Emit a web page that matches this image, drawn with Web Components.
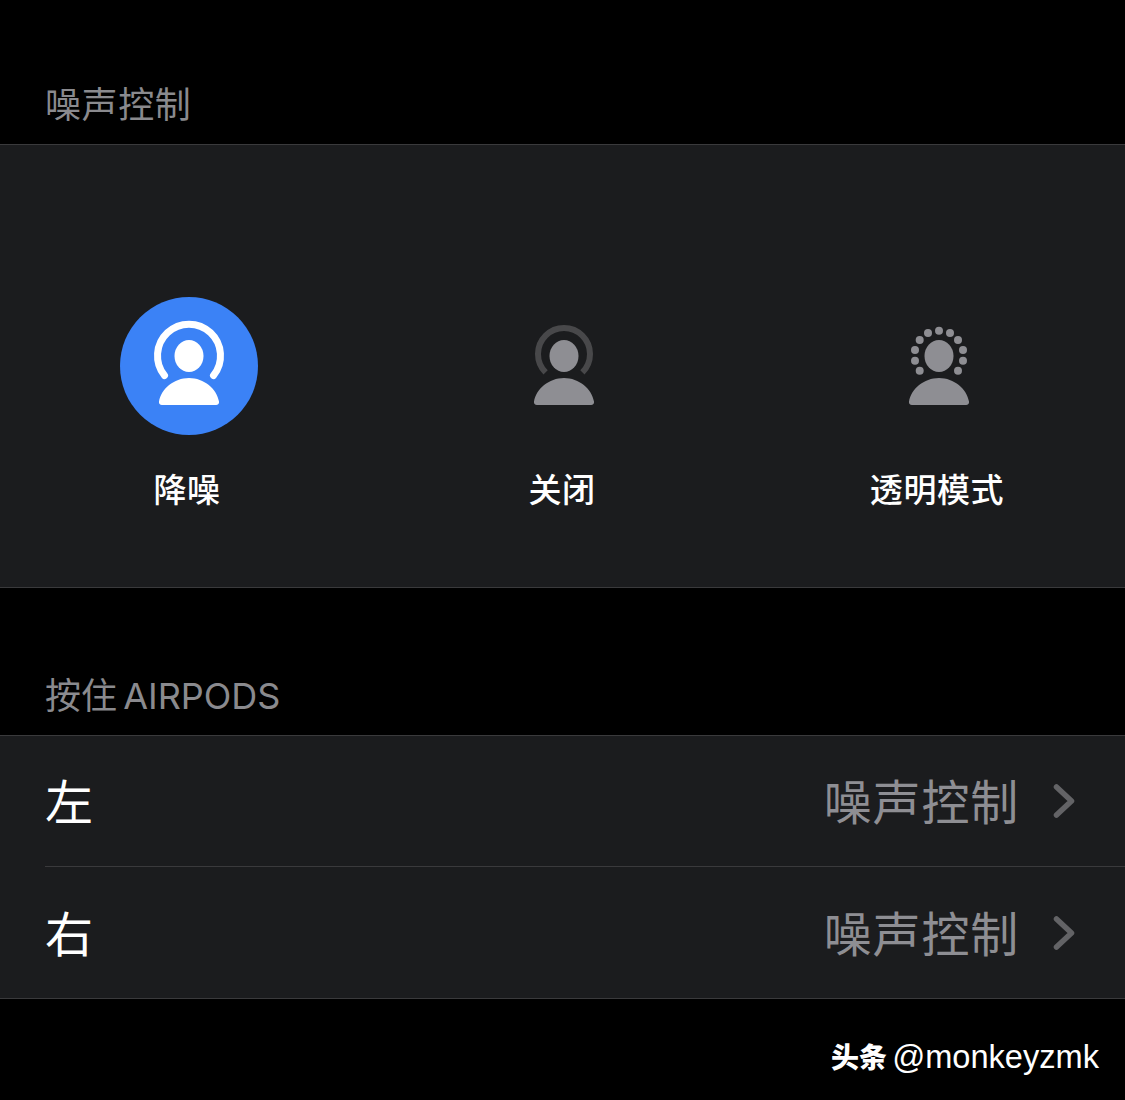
<!DOCTYPE html>
<html lang="zh">
<head>
<meta charset="utf-8">
<title>AirPods</title>
<style>
html, body { margin: 0; background: #000; }
body { width: 1125px; height: 1100px; overflow: hidden; font-family: Inter, "Noto Sans CJK SC", sans-serif; }
</style>
</head>
<body>
<section-title style="--h:144px;--ls:.6px">噪声控制</section-title>
<noise-panel>
  <noise-option mode="anc" label="降噪"></noise-option>
  <noise-option mode="off" label="关闭"></noise-option>
  <noise-option mode="transparent" label="透明模式"></noise-option>
</noise-panel>
<section-title style="--h:147px">按住 AIRPODS</section-title>
<row-group>
  <nav-row value="噪声控制">左</nav-row>
  <nav-row value="噪声控制" last>右</nav-row>
</row-group>
<water-mark></water-mark>

<script>
const FONT = 'Inter, "Noto Sans CJK SC", sans-serif';

class SectionTitle extends HTMLElement {
  constructor() {
    super();
    this.attachShadow({ mode: 'open' }).innerHTML = `
<style>
:host { display: flex; align-items: flex-end; box-sizing: border-box; height: var(--h); padding: 0 45px 16px; }
div { font: 400 36px/46px ${FONT}; color: #8a8a8e; white-space: pre; word-spacing: -4px; letter-spacing: var(--ls, 0); }
</style>
<div><slot></slot></div>`;
  }
}
customElements.define('section-title', SectionTitle);

class NoisePanel extends HTMLElement {
  constructor() {
    super();
    this.attachShadow({ mode: 'open' }).innerHTML = `
<style>
:host { display: grid; grid-template-columns: repeat(3, 375px); box-sizing: border-box; height: 444px; padding-top: 152px;
  background: #1b1c1e; border-top: 1px solid #3a3a3c; border-bottom: 1px solid #3a3a3c; }
</style>
<slot></slot>`;
  }
}
customElements.define('noise-panel', NoisePanel);

// the head and shoulders are the same in all three modes
const person = (fill) => `
<ellipse cx="69" cy="59" rx="14.5" ry="16" fill="${fill}"/>
<path d="M42 108c-2 0-3.400-1.200-3-3.500C41 92 54 81 69 81s28 11 30 23.500c.4 2.300-1 3.500-3 3.500z" fill="${fill}"/>`;

const dots = [[69,33.7],[58,36],[80,36],[49.7,43],[88,43],[45,53],[93,53],[45,63.7],[93,63.7],[49.7,73.7],[88,73.7]];

const icons = {
  anc: `<circle cx="69" cy="69" r="69" fill="#3b82f6"/>` + person('#fff') +
    `<path d="M44.500 78.500A31.500 31.500 0 1 1 93.500 78.500" fill="none" stroke="#fff" stroke-width="7" stroke-linecap="round"/>`,
  off: person('#8e8e93') +
    `<path d="M50.600 75.400A26 26 0 1 1 87.400 75.400" fill="none" stroke="#48484a" stroke-width="6"/>`,
  transparent: person('#8e8e93') +
    dots.map(d => `<circle cx="${d[0]}" cy="${d[1]}" r="4" fill="#8e8e93"/>`).join('')
};

class NoiseOption extends HTMLElement {
  constructor() {
    super();
    this.attachShadow({ mode: 'open' }).innerHTML = `
<style>
:host { display: flex; flex-direction: column; align-items: center; }
svg { display: block; width: 138px; height: 138px; margin-left: 3px; }
span { margin-top: 33px; padding-right: 1px; font: 500 33px/44px ${FONT}; letter-spacing: .6px; color: #fff; }
</style>
<svg viewBox="0 0 138 138">${icons[this.getAttribute('mode')]}</svg>
<span>${this.getAttribute('label')}</span>`;
  }
}
customElements.define('noise-option', NoiseOption);

class RowGroup extends HTMLElement {
  constructor() {
    super();
    this.attachShadow({ mode: 'open' }).innerHTML = `
<style>
:host { display: block; background: #1b1c1e; border-top: 1px solid #3a3a3c; border-bottom: 1px solid #3a3a3c; }
</style>
<slot></slot>`;
  }
}
customElements.define('row-group', RowGroup);

class NavRow extends HTMLElement {
  constructor() {
    super();
    this.attachShadow({ mode: 'open' }).innerHTML = `
<style>
:host { display: block; padding-left: 45px; }
.in { display: flex; align-items: center; height: 130px; padding-right: 50px; border-bottom: 1px solid #3a3a3c; }
:host([last]) .in { border-bottom: 0; height: 131px; }
.name, .val { padding-top: 4px; font: 400 48px/60px ${FONT}; }
.name { flex: 1; color: #fff; }
.val { color: #8e8e93; letter-spacing: .8px; }
svg { display: block; width: 22px; height: 38px; margin-left: 34px; }
</style>
<div class="in">
  <div class="name"><slot></slot></div>
  <div class="val">${this.getAttribute('value')}</div>
  <svg viewBox="0 0 22 38"><path d="M3.500 5L18.500 19L3.500 33" fill="none" stroke="#636366" stroke-width="5.500" stroke-linecap="round" stroke-linejoin="round"/></svg>
</div>`;
  }
}
customElements.define('nav-row', NavRow);

class WaterMark extends HTMLElement {
  constructor() {
    super();
    this.attachShadow({ mode: 'open' }).innerHTML = `
<style>
:host { display: block; padding: 38px 26px 0 0; text-align: right; color: #fff; }
b { font: 900 28px/38px "Noto Sans CJK SC", sans-serif; }
span { font: 400 32.6px/38px "Liberation Sans", sans-serif; white-space: pre; word-spacing: -4px; }
</style>
<b>头条</b><span> @monkeyzmk</span>`;
  }
}
customElements.define('water-mark', WaterMark);
</script>
</body>
</html>
